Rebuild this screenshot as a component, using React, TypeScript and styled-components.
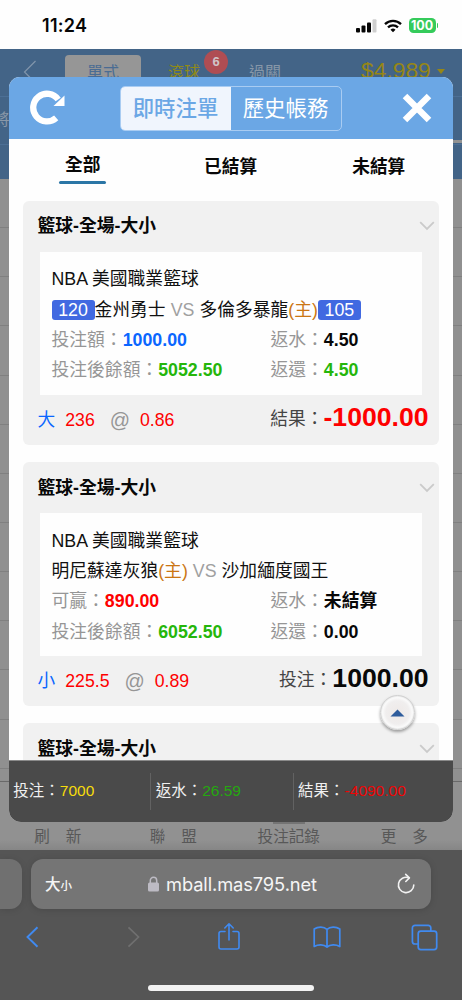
import React from "react";
import styled, { createGlobalStyle, css } from "styled-components";

const GlobalStyle = createGlobalStyle`
  * { box-sizing: border-box; }
  html, body { margin: 0; padding: 0; }
  body {
    width: 462px;
    height: 1000px;
    overflow: hidden;
    background: #fff;
    font-family: "Liberation Sans", "Noto Sans CJK TC", sans-serif;
    white-space: nowrap;
  }
`;

const Screen = styled.div`
  position: relative;
  width: 462px;
  height: 1000px;
  overflow: hidden;
  display: flex;
  flex-direction: column;
`;

/* ---------- status bar ---------- */

const StatusBar = styled.header`
  flex: none;
  height: 49px;
  display: flex;
  justify-content: space-between;
  padding: 15px 24px 0 42px;
  background: #fefefe;
`;

const Clock = styled.time`
  font: 600 18px/21px Inter, sans-serif;
  letter-spacing: 0.3px;
  color: #060606;
`;

const StatusIcons = styled.div`
  display: flex;
  height: 21px;
  align-items: center;
`;

const Battery = styled.div`
  margin-left: 7px;
  width: 27px;
  height: 15px;
  border-radius: 4.5px;
  background: #35cb5b;
  color: #fff;
  font: 700 12.5px/15px Inter, sans-serif;
  text-align: center;
  letter-spacing: -0.1px;
`;

const BatteryNub = styled.div`
  width: 1.5px;
  height: 5px;
  margin-left: 1px;
  border-radius: 0 2px 2px 0;
  background: #35cb5b;
`;

/* ---------- dimmed page behind the dialog ---------- */

const Backdrop = styled.div`
  flex: none;
  height: 801px;
  display: flex;
  flex-direction: column;
  background: #909090;
`;

const SiteHeader = styled.div`
  height: 48px;
  flex: none;
  display: flex;
  align-items: flex-start;
  background: #436487;
  border-bottom: 1px solid #4c6f95;
`;

const SiteBack = styled.svg`
  margin: 11px 0 0 23px;
  width: 14px;
  height: 24px;
`;

const SiteTab = styled.span<{ $active?: boolean; $color: string }>`
  height: 34px;
  margin-top: 6px;
  font-size: 16px;
  line-height: 35px;
  text-align: center;
  color: ${(p) => p.$color};
  ${(p) =>
    p.$active &&
    css`
      width: 76px;
      margin-left: 28px;
      border-radius: 4px 4px 0 0;
      background: #969696;
    `}
`;

const LiveTab = styled(SiteTab)`
  margin-left: 27px;
`;

const PassTab = styled(SiteTab)`
  margin-left: 21px;
`;

const LiveCount = styled.span`
  width: 24px;
  height: 24px;
  margin: 1px 0 0 4px;
  border-radius: 50%;
  background: #af4d53;
  color: #cfc4c8;
  font: 700 13px/24px "Liberation Sans", sans-serif;
  text-align: center;
`;

const Balance = styled.span`
  margin: 8px 0 0 80px;
  font-size: 22.8px;
  line-height: 26px;
  color: #968616;
`;

const Caret = styled.span`
  margin: 20px 0 0 6px;
  border: 4.5px solid transparent;
  border-top: 5.5px solid #968616;
  border-bottom: 0;
`;

const SubHeader = styled.div`
  height: 48px;
  flex: none;
  background: #436487;
  border-bottom: 1px solid #4c6f95;
  color: #8a98a8;
  font-size: 15.5px;
  line-height: 46px;
  text-indent: -6px;
`;

const SubHeaderStrip = styled.div`
  height: 34px;
  flex: none;
  background: #436487;
`;

/* light seam that shows at the right edge above the strip */
const Seam = styled.div`
  height: 3px;
  margin: -5px 0 2px auto;
  width: 12px;
  flex: none;
  background: #939393;
`;

const Row = styled.div`
  height: 49.15px;
  flex: none;
  border-bottom: 1px solid #808080;
`;

const LastRow = styled.div`
  flex: 1;
  border-bottom: 1px solid #696969;
`;

const SiteNav = styled.nav`
  height: 68px;
  flex: none;
  display: flex;
  background: linear-gradient(#919191 0, #919191 58px, #868686 68px);
`;

const SiteNavItem = styled.span<{ $spaced?: boolean; $active?: boolean }>`
  flex: 1;
  display: flex;
  flex-direction: column;
  align-items: center;
  font-size: 15.6px;
  line-height: 24px;
  color: #585858;
  word-spacing: ${(p) => (p.$spaced ? "11.5px" : "0")};
  &::before {
    content: "";
    width: 32px;
    height: 4px;
    margin: 38px 0 1px;
    background: ${(p) => (p.$active ? "#747474" : "transparent")};
  }
`;

/* ---------- browser chrome ---------- */

const BrowserBar = styled.footer`
  flex: none;
  height: 150px;
  display: flex;
  flex-direction: column;
  background: #555;
`;

const AddressRow = styled.div`
  display: flex;
  height: 59px;
  padding-top: 9px;
  gap: 9px;
`;

const PreviousTab = styled.div`
  width: 22px;
  height: 50px;
  border-radius: 0 12px 12px 0;
  background: #707070;
  box-shadow: 0 1px 7px rgba(0, 0, 0, 0.12);
`;

const AddressField = styled.div`
  width: 400px;
  height: 50px;
  display: flex;
  align-items: center;
  border-radius: 12px;
  background: #757575;
  box-shadow: 0 1px 7px rgba(0, 0, 0, 0.15);
  color: #f5f5f5;
`;

const TextSize = styled.span`
  width: 102px;
  padding-left: 14px;
  font: 500 15.5px/24px "Noto Sans CJK TC", sans-serif;
  small { font-size: 11.5px; }
`;

const Host = styled.span`
  width: 230px;
  margin-left: 7px;
  font: 400 18.3px/24px Inter, sans-serif;
  letter-spacing: -0.1px;
`;

const ToolRow = styled.div`
  height: 56px;
  display: flex;
  justify-content: space-between;
  align-items: center;
  padding: 0 24px 0 26px;
`;

const HomeIndicator = styled.div`
  width: 166px;
  height: 6px;
  margin: 20px 0 0 148px;
  border-radius: 3px;
  background: #f2f2f2;
`;

/* ---------- dialog ---------- */

const Dialog = styled.section`
  position: absolute;
  left: 9px;
  top: 77px;
  width: 444px;
  height: 745px;
  display: flex;
  flex-direction: column;
  overflow: hidden;
  border-radius: 11px 11px 12px 12px;
  background: #fefefe;
`;

const DialogHeader = styled.div`
  height: 62px;
  flex: none;
  display: flex;
  align-items: center;
  padding: 0 21px;
  background: #6ba7e5;
`;

const Segments = styled.div`
  display: flex;
  width: 222px;
  height: 45px;
  margin: 0 auto 0 54px;
  border: 1px solid #a9ccf2;
  border-radius: 5px;
  overflow: hidden;
`;

const Segment = styled.button<{ $active?: boolean }>`
  flex: 1;
  padding: 0 1px 3px 0;
  border: 0;
  font: 400 21.4px/40px "Noto Sans CJK TC", sans-serif;
  background: ${(p) => (p.$active ? "#f0f5fd" : "transparent")};
  color: ${(p) => (p.$active ? "#6ba7e5" : "#fff")};
  font-weight: ${(p) => (p.$active ? 500 : 400)};
`;

const Filters = styled.div`
  height: 61.5px;
  flex: none;
  display: flex;
`;

const Filter = styled.div<{ $active?: boolean }>`
  width: 148.2px;
  display: flex;
  flex-direction: column;
  align-items: center;
  padding-top: ${(p) => (p.$active ? 10.5 : 12.5)}px;
  font-size: 17.7px;
  font-weight: 700;
  line-height: 30px;
  color: #080808;
  &:first-child { width: 147.5px; }
  &::after {
    content: "";
    display: ${(p) => (p.$active ? "block" : "none")};
    width: 47px;
    height: 3px;
    margin-top: 1px;
    border-radius: 2px;
    background: #2b76a6;
  }
`;

const CardList = styled.div`
  flex: 1;
  min-height: 0;
  overflow: hidden;
  padding: 0 14px;
`;

const Card = styled.article`
  height: 244.5px;
  margin-bottom: 16.8px;
  border-radius: 6px;
  background: #f1f1f1;
  font-size: 17.8px;
`;

const CardHeader = styled.div`
  height: 51.5px;
  display: flex;
  align-items: center;
  justify-content: space-between;
  padding: 0 4px 0 14.5px;
  font-weight: 700;
  line-height: 24px;
  color: #080808;
`;

const CardBody = styled.div`
  height: 142.5px;
  margin: 0 17px;
  padding: 12.3px 11.5px 0;
  background: #fefefe;
`;

const Line = styled.div`
  height: 30.3px;
  line-height: 30px;
  display: flex;
  align-items: center;
  color: #111;
`;

const Field = styled.div<{ $wide?: boolean }>`
  ${(p) => p.$wide && "width: 219px;"}
  color: #969696;
`;

const Value = styled.strong<{ $color: string }>`
  color: ${(p) => p.$color};
`;

const Score = styled.span`
  width: 43px;
  height: 20px;
  border-radius: 3px;
  background: #4169e1;
  color: #fff;
  line-height: 20px;
  text-align: center;
`;

const Versus = styled.span`
  margin: 0 5px;
  color: #a0a0a0;
`;

const Home = styled.span`
  color: #cb7614;
`;

const CardFooter = styled.div`
  height: 50.5px;
  display: flex;
  align-items: center;
  padding: 0 10.5px 0 14.5px;
  line-height: 24px;
`;

const Pick = styled.span<{ $color: string; $gap: number; $size?: number }>`
  margin-right: ${(p) => p.$gap}px;
  color: ${(p) => p.$color};
  font-size: ${(p) => p.$size ?? 17.7}px;
`;

const Outcome = styled.div`
  margin-left: auto;
  padding-bottom: 2px;
  display: flex;
  align-items: center;
  color: #444;
`;

const Amount = styled.strong<{ $color: string }>`
  height: 36px;
  font-size: 26.6px;
  line-height: 32px;
  color: ${(p) => p.$color};
`;

const Totals = styled.div`
  height: 62px;
  flex: none;
  display: flex;
  align-items: center;
  background: #4a4a4a;
  border-top: 1px solid #8a8a8a;
`;

const Total = styled.div<{ $color: string }>`
  width: 142.4px;
  height: 37px;
  padding-left: 4.3px;
  border-right: 1px solid #626262;
  font-size: 15.5px;
  line-height: 36px;
  color: #f0f0f0;
  &:last-child { border-right: 0; }
  span { color: ${(p) => p.$color}; }
`;

const TopButton = styled.button`
  position: absolute;
  left: 380px;
  top: 695px;
  width: 35px;
  height: 35px;
  padding: 0;
  display: flex;
  align-items: center;
  justify-content: center;
  border: 1px solid #d0d0d0;
  border-radius: 50%;
  background: radial-gradient(circle, #eee9e7 0, #f0eeee 50%, #fafafa 64%, #e6e6e6 72%);
  box-shadow: 0 2px 3px rgba(0, 0, 0, 0.35);
`;

type Bet = {
  match: React.ReactNode;
  stake: [string, string, string];
  balance: string;
  rebate: string;
  returned: [string, string];
  pick: [string, string, string];
  outcome: [string, string, string];
};

const bets: Bet[] = [
  {
    match: (
      <>
        <Score>120</Score>金州勇士<Versus>VS</Versus>多倫多暴龍<Home>(主)</Home>
        <Score>105</Score>
      </>
    ),
    stake: ["投注額：", "1000.00", "#0a66ff"],
    balance: "5052.50",
    rebate: "4.50",
    returned: ["4.50", "#25b60b"],
    pick: ["大", "236", "0.86"],
    outcome: ["結果：", "-1000.00", "#fe0000"],
  },
  {
    match: (
      <>
        明尼蘇達灰狼<Home>(主)</Home>
        <Versus>VS</Versus>沙加緬度國王
      </>
    ),
    stake: ["可贏：", "890.00", "#fe0000"],
    balance: "6052.50",
    rebate: "未結算",
    returned: ["0.00", "#080808"],
    pick: ["小", "225.5", "0.89"],
    outcome: ["投注：", "1000.00", "#080808"],
  },
];

const CardTitle = () => (
  <CardHeader>
    <span>籃球-全場-大小</span>
    <svg width="16" height="10" viewBox="0 0 16 10" fill="none" stroke="#cacaca" strokeWidth="1.8">
      <path d="M1.2 1.2 8 8l6.800-6.800" />
    </svg>
  </CardHeader>
);

const BetCard = ({ bet }: { bet: Bet }) => (
  <Card>
    <CardTitle />
    <CardBody>
      <Line>NBA 美國職業籃球</Line>
      <Line>{bet.match}</Line>
      <Line>
        <Field $wide>
          {bet.stake[0]}
          <Value $color={bet.stake[2]}>{bet.stake[1]}</Value>
        </Field>
        <Field>
          返水：<Value $color="#080808">{bet.rebate}</Value>
        </Field>
      </Line>
      <Line>
        <Field $wide>
          投注後餘額：<Value $color="#25b60b">{bet.balance}</Value>
        </Field>
        <Field>
          返還：<Value $color={bet.returned[1]}>{bet.returned[0]}</Value>
        </Field>
      </Line>
    </CardBody>
    <CardFooter>
      <Pick $color="#0a66ff" $gap={10}>{bet.pick[0]}</Pick>
      <Pick $color="#fe0000" $gap={15}>{bet.pick[1]}</Pick>
      <Pick $color="#969696" $gap={10} $size={20}>@</Pick>
      <Pick $color="#fe0000" $gap={0}>{bet.pick[2]}</Pick>
      <Outcome>
        {bet.outcome[0]}
        <Amount $color={bet.outcome[2]}>{bet.outcome[1]}</Amount>
      </Outcome>
    </CardFooter>
  </Card>
);

export default function App() {
  return (
    <Screen>
      <GlobalStyle />
      <StatusBar>
        <Clock>11:24</Clock>
        <StatusIcons>
          <svg width="21" height="14" viewBox="0 0 21 14">
            <rect x="0" y="9" width="4" height="4.500" rx="1" fill="#050505" />
            <rect x="5.500" y="6.500" width="4" height="7" rx="1" fill="#050505" />
            <rect x="11" y="3.500" width="4" height="10" rx="1" fill="#050505" />
            <rect x="16.500" y="0.300" width="4" height="13.200" rx="1" fill="#cfcfcf" />
          </svg>
          <svg width="18" height="14" viewBox="0 0 18 14" style={{ marginLeft: 7 }} fill="none" stroke="#050505" strokeWidth="2.300">
            <path d="M1 5.100a11.500 11.500 0 0 1 16 0" />
            <path d="M4 8.300a7.200 7.200 0 0 1 10 0" />
            <path d="M6.500 10.700a3.600 3.600 0 0 1 5 0L9 13.300z" fill="#050505" stroke="none" />
          </svg>
          <Battery>100</Battery>
          <BatteryNub />
        </StatusIcons>
      </StatusBar>

      <Backdrop>
        <SiteHeader>
          <SiteBack viewBox="0 0 14 24" fill="none" stroke="#8195ab" strokeWidth="1.200">
            <path d="M12.500 1 1.500 12l11 11" />
          </SiteBack>
          <SiteTab $active $color="#4a6c93">單式</SiteTab>
          <LiveTab $color="#8f8a18">滾球</LiveTab>
          <LiveCount>6</LiveCount>
          <PassTab $color="#8797a8">過關</PassTab>
          <Balance>$4,989</Balance>
          <Caret />
        </SiteHeader>
        <SubHeader>將</SubHeader>
        <Seam />
        <SubHeaderStrip />
        {Array.from({ length: 12 }, (_, i) => (
          <Row key={i} />
        ))}
        <LastRow />
        <SiteNav>
          <SiteNavItem $spaced>刷 新</SiteNavItem>
          <SiteNavItem $spaced>聯 盟</SiteNavItem>
          <SiteNavItem $active>投注記錄</SiteNavItem>
          <SiteNavItem $spaced>更 多</SiteNavItem>
        </SiteNav>
      </Backdrop>

      <BrowserBar>
        <AddressRow>
          <PreviousTab />
          <AddressField>
            <TextSize>
              大<small>小</small>
            </TextSize>
            <svg width="11" height="16" viewBox="0 0 11 16" style={{ marginLeft: 15 }}>
              <rect x="0" y="6.500" width="11" height="9" rx="1.500" fill="#bdbbc4" />
              <path d="M2.300 7V4.500a3.200 3.200 0 0 1 6.400 0V7" fill="none" stroke="#bdbbc4" strokeWidth="1.500" />
            </svg>
            <Host>mball.mas795.net</Host>
            <svg width="20" height="22" viewBox="0 0 20 22" fill="none" stroke="#f2f2f2" strokeWidth="1.600" strokeLinecap="round" strokeLinejoin="round">
              <path d="M12.700 4.700A7.700 7.700 0 1 0 17.800 12" />
              <path d="M9.700 1.400l3.700 3.500-3.600 3.600" />
            </svg>
          </AddressField>
        </AddressRow>
        <ToolRow>
          <svg width="13" height="22" viewBox="0 0 13 22" fill="none" stroke="#408af0" strokeWidth="1.900">
            <path d="M11.500 1.300 1.500 11l10 9.700" />
          </svg>
          <svg width="13" height="22" viewBox="0 0 13 22" fill="none" stroke="#707070" strokeWidth="1.700" style={{ marginLeft: 59 }}>
            <path d="M1.500 1.300 11.500 11l-10 9.700" />
          </svg>
          <svg width="24" height="30" viewBox="0 0 24 30" fill="none" stroke="#408af0" strokeWidth="1.600" strokeLinecap="round" strokeLinejoin="round" style={{ marginLeft: 49 }}>
            <path d="M8 9.500H4a2 2 0 0 0-2 2v13.500a2 2 0 0 0 2 2h16a2 2 0 0 0 2-2V11.500a2 2 0 0 0-2-2h-4M12 18V2M7.800 6 12 1.800l4.200 4.200" />
          </svg>
          <svg width="28" height="24" viewBox="0 0 28 24" fill="none" stroke="#408af0" strokeWidth="1.700" strokeLinejoin="round" style={{ marginLeft: 43 }}>
            <path d="M14 4.500C11 1.300 5 1.300 1.200 4v17.500c4-2.200 9.600-2.200 12.800.5 3.200-2.700 8.800-2.700 12.800-.5V4C23 1.300 17 1.300 14 4.500zV22" />
          </svg>
          <svg width="27" height="27" viewBox="0 0 27 27" fill="none" stroke="#408af0" strokeWidth="1.700" style={{ marginLeft: 42 }}>
            <rect x="7.200" y="7.200" width="18.500" height="18.500" rx="2.600" />
            <path d="M7.200 20H4a2.600 2.600 0 0 1-2.600-2.600V4A2.600 2.600 0 0 1 4 1.400h13.200A2.600 2.600 0 0 1 19.800 4v3.200" />
          </svg>
        </ToolRow>
        <HomeIndicator />
      </BrowserBar>

      <Dialog>
        <DialogHeader>
          <svg width="36" height="36" viewBox="0 0 36 36">
            <path d="M28.200 9.500A13.800 13.800 0 1 0 26.200 27.900" fill="none" stroke="#fff" strokeWidth="6.300" />
            <path d="M34.500 5.500v10.500H23.500z" fill="#fff" />
          </svg>
          <Segments>
            <Segment $active>即時注單</Segment>
            <Segment>歷史帳務</Segment>
          </Segments>
          <svg width="30" height="30" viewBox="0 0 30 30" stroke="#fff" strokeWidth="6.400">
            <path d="M3 3l24 24M27 3 3 27" />
          </svg>
        </DialogHeader>
        <Filters>
          <Filter $active>全部</Filter>
          <Filter>已結算</Filter>
          <Filter>未結算</Filter>
        </Filters>
        <CardList>
          {bets.map((bet, i) => (
            <BetCard key={i} bet={bet} />
          ))}
          <Card>
            <CardTitle />
          </Card>
        </CardList>
        <Totals>
          <Total $color="#f6dc0c">投注：<span>7000</span></Total>
          <Total $color="#25a80f">返水：<span>26.59</span></Total>
          <Total $color="#ee0505">結果：<span>-4090.00</span></Total>
        </Totals>
      </Dialog>

      <TopButton aria-label="回到頂部">
        <svg width="15" height="8" viewBox="0 0 15 8">
          <path d="M7.500.500 14.500 7.500H.500z" fill="#2e5c9c" />
        </svg>
      </TopButton>
    </Screen>
  );
}
